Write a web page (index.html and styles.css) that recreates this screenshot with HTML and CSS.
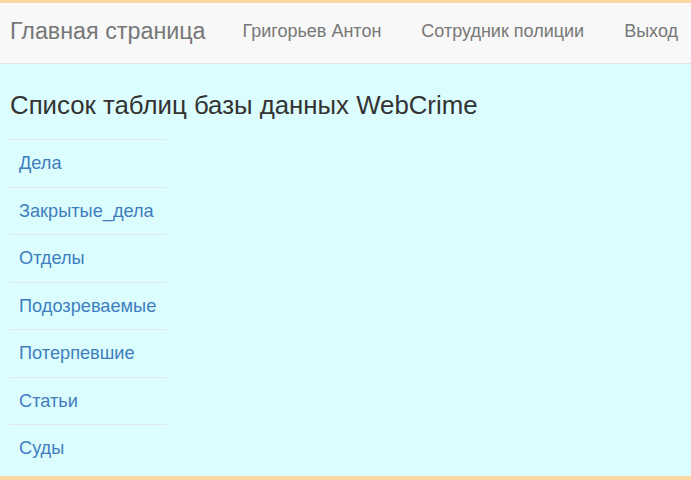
FILE: index.html
```html
<!DOCTYPE html>
<html lang="ru">
<head>
<meta charset="utf-8">
<title>WebCrime</title>
<link rel="stylesheet" href="styles.css">
</head>
<body>
<div class="page">
  <nav class="navbar">
    <a class="brand" href="#">Главная страница</a>
    <ul class="nav">
      <li><a href="#">Григорьев Антон</a></li>
      <li><a href="#">Сотрудник полиции</a></li>
      <li><a href="#">Выход</a></li>
    </ul>
  </nav>
  <main class="content">
    <h1 class="title">Список таблиц базы данных WebCrime</h1>
    <ul class="tables">
      <li><a href="#">Дела</a></li>
      <li><a href="#">Закрытые_дела</a></li>
      <li><a href="#">Отделы</a></li>
      <li><a href="#">Подозреваемые</a></li>
      <li><a href="#">Потерпевшие</a></li>
      <li><a href="#">Статьи</a></li>
      <li><a href="#">Суды</a></li>
    </ul>
  </main>
  <footer class="footer"></footer>
</div>
</body>
</html>
```
FILE: styles.css
```css
html, body {
  margin: 0;
  padding: 0;
  height: 100%;
}
body {
  font-family: "Liberation Sans", Arial, sans-serif;
  background: #dcfdfd;
}
.page {
  display: flex;
  flex-direction: column;
  height: 480px;
  overflow: hidden;
}
.navbar {
  display: flex;
  align-items: center;
  height: 57px;
  background: #f8f8f8;
  border-top: 3px solid #fcd9a2;
  border-bottom: 1px solid #e6e6e6;
  padding: 0 13px 3px 10px;
  flex: none;
  white-space: nowrap;
}
.brand {
  font-size: 23.3px;
  color: #777;
  text-decoration: none;
  flex: none;
}
.nav {
  display: flex;
  list-style: none;
  margin: 0 0 0 auto;
  padding: 0;
  flex: none;
}
.nav li a {
  display: block;
  padding: 0 20px;
  font-size: 18px;
  color: #777;
  text-decoration: none;
}
.nav li:first-child a {
  padding-left: 22px;
}
.nav li:last-child a {
  padding-right: 0;
}
.content {
  flex: 1;
  padding: 28px 0 0 9px;
}
.title {
  margin: 0 0 21px 1px;
  font-size: 25.8px;
  font-weight: normal;
  line-height: 26px;
  color: #333;
}
.tables {
  list-style: none;
  margin: 0;
  padding: 0;
  width: 157px;
}
.tables li {
  border-top: 1px solid #dfe8ea;
}
.tables li a {
  display: block;
  padding: 12px 10px 12px 10px;
  line-height: 23.5px;
  height: 22.5px;
  font-size: 18.2px;
  color: #3f7dbf;
  text-decoration: none;
  white-space: nowrap;
}
.footer {
  flex: none;
  height: 4px;
  background: #fcd9a2;
}
```
